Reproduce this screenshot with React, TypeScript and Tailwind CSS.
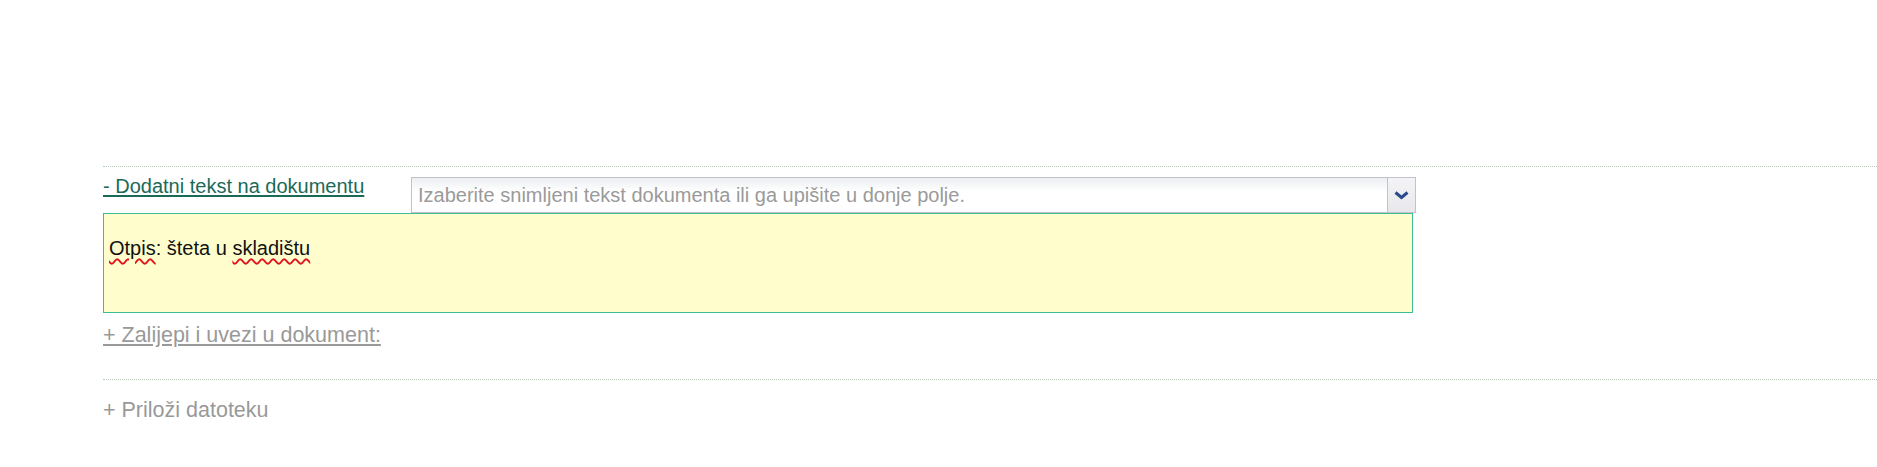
export default function App() {
  return (
    <div className="w-[1877px] h-[467px] bg-white font-['Liberation_Sans',Arial,sans-serif] text-[20px]">
      <div className="h-[166px]" />

      <div className="ml-[103px] border-t border-dotted border-[#b9c9b9]">
        {/* Dodatni tekst */}
        <div className="flex items-start pt-[8px]">
          <a href="#" className="w-[308px] text-[#1a6a58] underline underline-offset-2 leading-[23px]">
            - Dodatni tekst na dokumentu
          </a>
          <div className="mt-[2px] flex w-[1005px] h-[36px] border border-[#c2c2cc] bg-gradient-to-b from-[#eceef0] to-white to-[40%]">
            <div className="flex-1 flex items-center pl-[6px] text-[#9a9a9a]">
              Izaberite snimljeni tekst dokumenta ili ga upišite u donje polje.
            </div>
            <div className="w-[28px] flex items-center justify-center border-l border-[#c2c2cc] bg-gradient-to-b from-[#f4f4f6] to-[#e8e8ec]">
              <svg width="15" height="10" viewBox="0 0 15 10">
                <path d="M1.5 2.5 L7.5 7.5 L13.5 2.5" fill="none" stroke="#2b4a8c" strokeWidth="3" />
              </svg>
            </div>
          </div>
        </div>

        <div className="w-[1310px] h-[100px] border border-[#3cbf99] bg-[#fffdcc] px-[5px] pt-[23px] leading-[23px] text-[#111]">
          <span className="underline decoration-wavy decoration-[#e0141e] underline-offset-[3px] decoration-[1.5px]">Otpis</span>
          : šteta u{" "}
          <span className="underline decoration-wavy decoration-[#e0141e] underline-offset-[3px] decoration-[1.5px]">skladištu</span>
        </div>

        <div className="pt-[10px] h-[66px] text-[21.5px] leading-[25px]">
          <a href="#" className="text-[#999] underline underline-offset-2">
            + Zalijepi i uvezi u dokument:
          </a>
        </div>

        <div className="border-t border-dotted border-[#b9c9b9] pt-[18px] text-[21.5px] leading-[25px]">
          <span className="text-[#999]">+ Priloži datoteku</span>
        </div>
      </div>
    </div>
  );
}
